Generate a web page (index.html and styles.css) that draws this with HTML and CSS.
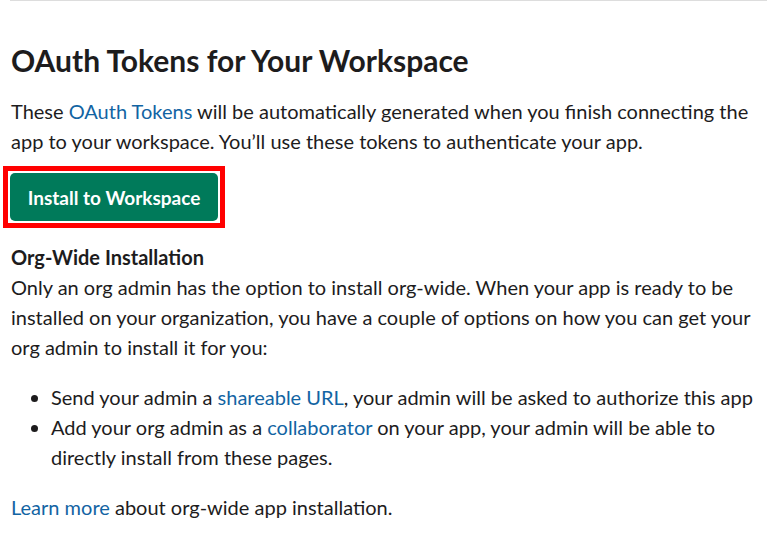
FILE: index.html
```html
<!DOCTYPE html>
<html lang="en">
<head>
	<meta charset="UTF-8">
	<title>OAuth Tokens for Your Workspace</title>
	<link rel="stylesheet" href="styles.css">
</head>
<body>
	<section class="tokens">
		<h2 class="tokens-title">OAuth Tokens for Your Workspace</h2>
		<p class="tokens-text">These <a href="#">OAuth Tokens</a> will be automatically generated when you finish connecting the app to your workspace. You’ll use these tokens to authenticate your app.</p>
		<div class="install">
			<span class="install-mark">
				<button class="install-btn" type="button">Install to Workspace</button>
			</span>
		</div>
		<div class="org-wide">
			<strong class="org-title">Org-Wide Installation</strong>
			<p class="tokens-text">Only an org admin has the option to install org-wide. When your app is ready to be installed on your organization, you have a couple of options on how you can get your org admin to install it for you:</p>
			<ul class="org-list">
				<li>Send your admin a <a href="#">shareable URL</a>, your admin will be asked to authorize this app</li>
				<li>Add your org admin as a <a href="#">collaborator</a> on your app, your admin will be able to directly install from these pages.</li>
			</ul>
			<p class="tokens-text"><a href="#">Learn more</a> about org-wide app installation.</p>
		</div>
	</section>
</body>
</html>
```

FILE: styles.css
```css
body {
	margin: 0;
	background: #fff;
	font-family: Lato, "Noto Sans", sans-serif;
	color: #1d1c1d;
}

.tokens {
	margin-left: 10px;
	padding-left: 1px;
	border-top: 1px solid #dddddd;
	padding-top: 37px;
}

.tokens-title {
	margin: 0;
	font-size: 30px;
	line-height: 44px;
	font-weight: 700;
}

.tokens-text {
	margin: 0;
	font-size: 20px;
	line-height: 30px;
}

.tokens-title + .tokens-text {
	margin-top: 14px;
}

a {
	color: #1264a3;
	text-decoration: none;
}

.install {
	margin: 10px 0 0 -8px;
}

.install-mark {
	display: inline-block;
	border: 5px solid #ff0000;
	padding: 2px;
}

.install-btn {
	display: block;
	width: 208px;
	height: 48px;
	border: 0;
	border-radius: 5px;
	background: #007a5a;
	color: #fff;
	font-family: Lato, "Noto Sans", sans-serif;
	font-size: 19px;
	font-weight: 700;
	cursor: pointer;
}

.org-wide {
	margin-top: 14px;
}

.org-title {
	display: block;
	font-size: 20px;
	line-height: 30px;
}

.org-list {
	margin: 20px 0;
	padding-left: 40px;
	font-size: 20px;
	line-height: 30px;
}
```
